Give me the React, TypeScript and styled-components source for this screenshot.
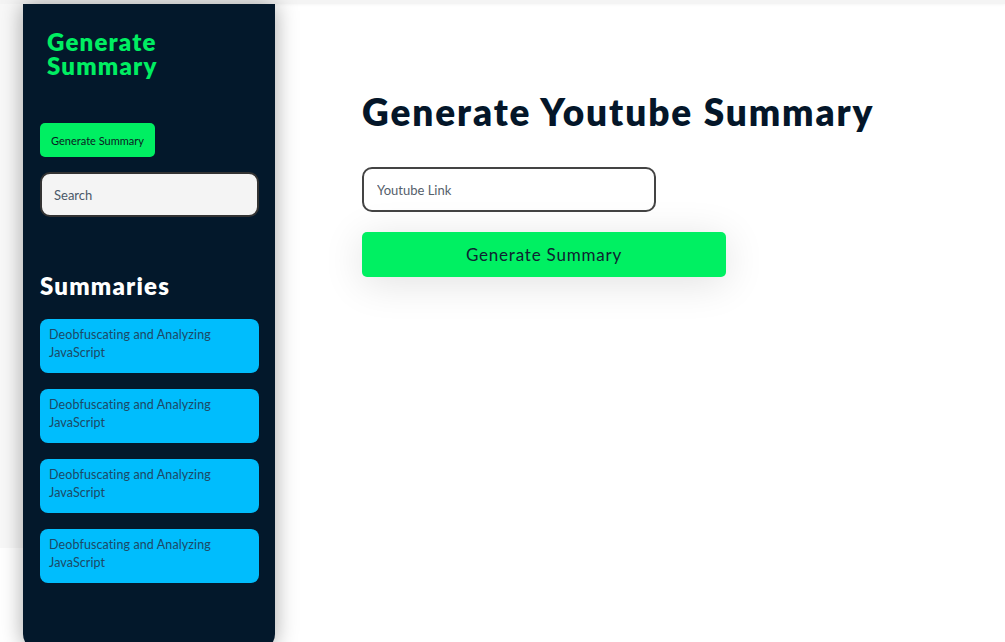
import styled, { createGlobalStyle } from "styled-components";

const GlobalStyle = createGlobalStyle`
  html, body {
    margin: 0;
    padding: 0;
    background: #ffffff;
    font-family: "Lato", "Open Sans", sans-serif;
    overflow: hidden;
  }
  * {
    box-sizing: border-box;
  }
`;

const summaries = [
  "Deobfuscating and Analyzing JavaScript",
  "Deobfuscating and Analyzing JavaScript",
  "Deobfuscating and Analyzing JavaScript",
  "Deobfuscating and Analyzing JavaScript",
];

const App: React.FC = () => {
  return (
    <>
      <GlobalStyle />
      <Page>
        <TopShade />
        <Layout>
          <Gutter />
          <Sidebar>
            <Brand>Generate Summary</Brand>
            <SmallButton>Generate Summary</SmallButton>
            <SearchInput placeholder="Search" />
            <SectionTitle>Summaries</SectionTitle>
            <CardList>
              {summaries.map((s, i) => (
                <Card key={i}>{s}</Card>
              ))}
            </CardList>
          </Sidebar>
          <Main>
            <Heading>Generate Youtube Summary</Heading>
            <Form>
              <LinkInput placeholder="Youtube Link" />
              <BigButton>Generate Summary</BigButton>
            </Form>
          </Main>
        </Layout>
      </Page>
    </>
  );
};

const Page = styled.div`
  position: relative;
  width: 100%;
  height: 100vh;
  overflow: hidden;
`;

const TopShade = styled.div`
  height: 4px;
  background: #f4f4f4;
  box-shadow: 0 1px 3px rgba(0, 0, 0, 0.04);
`;

const Layout = styled.div`
  display: flex;
  align-items: flex-start;
`;

const Gutter = styled.div`
  width: 23px;
  height: 544px;
  background: #f8f8f8;
  flex-shrink: 0;
`;

const Sidebar = styled.aside`
  position: relative;
  z-index: 1;
  width: 252px;
  height: 646px;
  flex-shrink: 0;
  background: #03182b;
  border-radius: 0 0 16px 16px;
  box-shadow: 0 0 22px rgba(0, 0, 0, 0.35);
  padding: 26px 16px 0 17px;
  display: flex;
  flex-direction: column;
`;

const Brand = styled.h1`
  margin: 0 0 0 7px;
  width: 140px;
  font-size: 24px;
  line-height: 24px;
  font-weight: 800;
  letter-spacing: 1.2px;
  color: #00ee62;
`;

const SmallButton = styled.button`
  margin-top: 45px;
  align-self: flex-start;
  width: 115px;
  height: 34px;
  border: none;
  border-radius: 5px;
  background: #00ef62;
  color: #0b1a22;
  font-family: inherit;
  font-size: 11px;
  padding: 0;
`;

const SearchInput = styled.input`
  margin-top: 15px;
  width: 219px;
  height: 45px;
  border: 2px solid #333;
  border-radius: 10px;
  background: #f4f4f4;
  padding: 0 12px;
  font-family: inherit;
  font-size: 13px;
  outline: none;
  &::placeholder {
    color: #4a5868;
  }
`;

const SectionTitle = styled.h2`
  margin: 55px 0 0;
  font-size: 24px;
  line-height: 28px;
  font-weight: 800;
  letter-spacing: 1.2px;
  color: #ffffff;
`;

const CardList = styled.div`
  margin-top: 19px;
  display: flex;
  flex-direction: column;
  gap: 16px;
`;

const Card = styled.div`
  width: 219px;
  height: 54px;
  border-radius: 8px;
  background: #00bdfd;
  color: #1d4966;
  font-size: 12.5px;
  line-height: 18px;
  letter-spacing: 0.1px;
  padding: 7px 9px;
`;

const Main = styled.main`
  flex: 1;
  padding: 85px 0 0 87px;
`;

const Heading = styled.h1`
  margin: 0;
  font-size: 37px;
  line-height: 46px;
  font-weight: 800;
  letter-spacing: 1.9px;
  color: #041629;
`;

const Form = styled.div`
  margin-top: 32px;
  display: flex;
  flex-direction: column;
  align-items: flex-start;
  gap: 20px;
`;

const LinkInput = styled.input`
  width: 294px;
  height: 45px;
  border: 2px solid #444;
  border-radius: 10px;
  background: #fff;
  padding: 0 13px;
  font-family: inherit;
  font-size: 13px;
  outline: none;
  &::placeholder {
    color: #55606b;
  }
`;

const BigButton = styled.button`
  width: 364px;
  height: 45px;
  border: none;
  border-radius: 5px;
  background: #00f062;
  color: #0e2430;
  font-family: inherit;
  font-size: 17px;
  letter-spacing: 0.8px;
  box-shadow: 0 6px 40px rgba(0, 0, 0, 0.12);
`;

export default App;
